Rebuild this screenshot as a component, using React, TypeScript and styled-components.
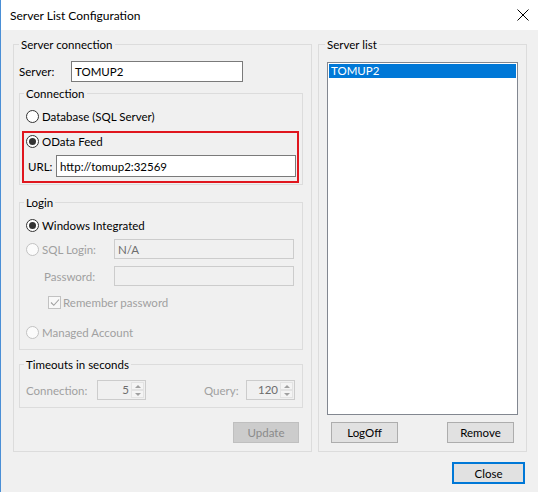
import React from "react";
import styled, { createGlobalStyle } from "styled-components";

const Global = createGlobalStyle`
  html, body { margin: 0; padding: 0; background: #f0f0f0; }
  body { font-family: Lato, "Liberation Sans", sans-serif; font-size: 11.5px; color: #000; }
  * { box-sizing: border-box; }
`;

const Window = styled.div`
  width: 538px;
  height: 492px;
  display: flex;
  flex-direction: column;
  border-left: 1px solid #4a8fd6;
  background: #f0f0f0;
  overflow: hidden;
`;

const TitleBar = styled.div`
  height: 30px;
  flex: none;
  background: #fff;
  display: flex;
  align-items: center;
  justify-content: space-between;
  padding: 0 9px 0 9px;
`;

const Title = styled.span`
  font-size: 12px;
  line-height: 15px;
`;

const CloseX = styled.svg`
  width: 12px;
  height: 12px;
  display: block;
`;

const Body = styled.div`
  flex: 1;
  display: flex;
  flex-direction: column;
  padding: 7px 11px 0 12px;
`;

const Columns = styled.div`
  display: flex;
  gap: 6px;
`;

const Group = styled.fieldset<{ $pad: string; $width?: number; $grow?: boolean }>`
  margin: 0;
  min-width: 0;
  border: 1px solid #dcdcdc;
  padding: ${(p) => p.$pad};
  display: flex;
  flex-direction: column;
  ${(p) => (p.$width ? `width: ${p.$width}px; flex: none;` : "")}
  ${(p) => (p.$grow ? "flex: 1;" : "")}
`;

const Legend = styled.legend<{ $offset?: number }>`
  padding: 0 2px;
  margin-left: ${(p) => p.$offset ?? 0}px;
  height: 15px;
  line-height: 15px;
`;

const Row = styled.div<{ $h?: number; $mt?: number; $ml?: number }>`
  display: flex;
  align-items: center;
  height: ${(p) => p.$h ?? 16}px;
  margin-top: ${(p) => p.$mt ?? 0}px;
  margin-left: ${(p) => p.$ml ?? 0}px;
  flex: none;
`;

const Label = styled.span<{ $w?: number; $disabled?: boolean; $ml?: number }>`
  ${(p) => (p.$w ? `width: ${p.$w}px; flex: none;` : "")}
  margin-left: ${(p) => p.$ml ?? 0}px;
  color: ${(p) => (p.$disabled ? "#a0a0a0" : "#000")};
  line-height: 15px;
  white-space: nowrap;
`;

const TextBox = styled.div<{ $w: number; $h?: number; $disabled?: boolean }>`
  width: ${(p) => p.$w}px;
  height: ${(p) => p.$h ?? 21}px;
  flex: none;
  border: 1px solid ${(p) => (p.$disabled ? "#cccccc" : "#7a7a7a")};
  background: ${(p) => (p.$disabled ? "#f0f0f0" : "#fff")};
  color: ${(p) => (p.$disabled ? "#6d6d6d" : "#000")};
  display: flex;
  align-items: center;
  padding-left: 3px;
  line-height: 15px;
`;

const RadioWrap = styled.label<{ $disabled?: boolean }>`
  display: flex;
  align-items: center;
  gap: 3px;
  color: ${(p) => (p.$disabled ? "#a0a0a0" : "#000")};
  line-height: 15px;
  white-space: nowrap;
`;

const RadioCircle = styled.span<{ $checked?: boolean; $disabled?: boolean }>`
  width: 13px;
  height: 13px;
  border-radius: 50%;
  border: 1px solid ${(p) => (p.$disabled ? "#c2c2c2" : "#333")};
  background: ${(p) => (p.$disabled ? "#fbfbfb" : "#fff")};
  display: flex;
  align-items: center;
  justify-content: center;
  flex: none;
  &::after {
    content: "";
    width: 7px;
    height: 7px;
    border-radius: 50%;
    background: #333;
    display: ${(p) => (p.$checked ? "block" : "none")};
  }
`;

const Radio: React.FC<{ label: string; checked?: boolean; disabled?: boolean }> = ({ label, checked, disabled }) => (
  <RadioWrap $disabled={disabled}>
    <RadioCircle $checked={checked} $disabled={disabled} />
    {label}
  </RadioWrap>
);

const CheckBox = styled.span`
  width: 13px;
  height: 13px;
  border: 1px solid #c2c2c2;
  background: #f8f8f8;
  display: flex;
  align-items: center;
  justify-content: center;
  flex: none;
  margin-right: 2px;
`;

const Highlight = styled.div`
  border: 2px solid #e0161e;
  padding: 0 1px 4px 2px;
  margin-top: 7px;
  display: flex;
  flex-direction: column;
`;

const Spinner = styled.div`
  width: 49px;
  height: 20px;
  flex: none;
  border: 1px solid #cccccc;
  background: #f0f0f0;
  display: flex;
  align-items: stretch;
`;

const SpinValue = styled.span`
  flex: 1;
  text-align: right;
  color: #6d6d6d;
  line-height: 18px;
  padding-right: 2px;
`;

const SpinButtons = styled.div`
  width: 14px;
  display: flex;
  flex-direction: column;
  padding: 1px 1px 1px 0;
`;

const SpinHalf = styled.div`
  flex: 1;
  display: flex;
  align-items: center;
  justify-content: center;
  background: #f4f4f4;
  border: 1px solid #e3e3e3;
`;

const Arrow = styled.span<{ $down?: boolean }>`
  width: 0;
  height: 0;
  border-left: 3px solid transparent;
  border-right: 3px solid transparent;
  ${(p) => (p.$down ? "border-top: 3px solid #a0a0a0;" : "border-bottom: 3px solid #a0a0a0;")}
`;

const SpinBox: React.FC<{ value: string }> = ({ value }) => (
  <Spinner>
    <SpinValue>{value}</SpinValue>
    <SpinButtons>
      <SpinHalf>
        <Arrow />
      </SpinHalf>
      <SpinHalf>
        <Arrow $down />
      </SpinHalf>
    </SpinButtons>
  </Spinner>
);

const TimeoutItem = styled.div<{ $right?: boolean }>`
  display: flex;
  align-items: center;
  ${(p) => (p.$right ? "margin-left: auto;" : "")}
`;

const Button = styled.button<{ $w: number; $h?: number; $disabled?: boolean; $default?: boolean }>`
  width: ${(p) => p.$w}px;
  height: ${(p) => p.$h ?? 21}px;
  flex: none;
  font-family: inherit;
  font-size: 11.5px;
  padding: 0;
  border: ${(p) => (p.$default ? "2px solid #0078d7" : p.$disabled ? "1px solid #bfbfbf" : "1px solid #adadad")};
  background: ${(p) => (p.$disabled ? "#cccccc" : "#e1e1e1")};
  color: ${(p) => (p.$disabled ? "#8a8a8a" : "#000")};
  line-height: 15px;
`;

const UpdateRow = styled.div`
  display: flex;
  justify-content: flex-end;
  margin-top: 14px;
  padding-right: 4px;
`;

const ListBox = styled.div`
  flex: 1;
  background: #fff;
  border: 1px solid #828790;
  padding: 1px;
`;

const ListItem = styled.div<{ $selected?: boolean }>`
  height: 14px;
  line-height: 14px;
  padding-left: 2px;
  background: ${(p) => (p.$selected ? "#0078d7" : "transparent")};
  color: ${(p) => (p.$selected ? "#fff" : "#000")};
`;

const ListButtons = styled.div`
  display: flex;
  justify-content: space-between;
  margin-top: 7px;
  padding: 0 4px;
`;

const Footer = styled.div`
  display: flex;
  justify-content: flex-end;
  margin-top: 10px;
  padding-right: 2px;
`;

export default function App() {
  return (
    <>
      <Global />
      <Window>
        <TitleBar>
          <Title>Server List Configuration</Title>
          <CloseX viewBox="0 0 12 12">
            <path d="M0.5 0.5 L11.5 11.5 M11.5 0.5 L0.5 11.5" stroke="#000" strokeWidth="1" fill="none" />
          </CloseX>
        </TitleBar>
        <Body>
          <Columns>
            <Group $pad="9px 8px 8px 5px" $width={299}>
              <Legend>Server connection</Legend>
              <Row $h={21}>
                <Label $w={52}>Server:</Label>
                <TextBox $w={172}>TOMUP2</TextBox>
              </Row>

              <Group $pad="7px 3px 1px 2px" style={{ marginTop: 4 }}>
                <Legend $offset={2}>Connection</Legend>
                <Row $ml={4}>
                  <Radio label="Database (SQL Server)" />
                </Row>
                <Highlight>
                  <Row>
                    <Radio label="OData Feed" checked />
                  </Row>
                  <Row $h={22} $mt={6} $ml={2}>
                    <Label $w={28}>URL:</Label>
                    <TextBox $w={240} $h={22}>http://tomup2:32569</TextBox>
                  </Row>
                </Highlight>
              </Group>

              <Group $pad="7px 8px 9px 6px" style={{ marginTop: 10 }}>
                <Legend $offset={-2}>Login</Legend>
                <Row>
                  <Radio label="Windows Integrated" checked />
                </Row>
                <Row $h={20} $mt={6}>
                  <Label $w={88} as="div">
                    <Radio label="SQL Login:" disabled />
                  </Label>
                  <TextBox $w={180} $h={20} $disabled>
                    N/A
                  </TextBox>
                </Row>
                <Row $h={20} $mt={7}>
                  <Label $w={70} $ml={18} $disabled>
                    Password:
                  </Label>
                  <TextBox $w={180} $h={20} $disabled />
                </Row>
                <Row $mt={8} $ml={22}>
                  <CheckBox>
                    <svg width="10" height="9" viewBox="0 0 10 9">
                      <path d="M1 4.5 L3.8 7.3 L9 1.5" stroke="#a0a0a0" strokeWidth="1.1" fill="none" />
                    </svg>
                  </CheckBox>
                  <Label $disabled>Remember password</Label>
                </Row>
                <Row $mt={14}>
                  <Radio label="Managed Account" disabled />
                </Row>
              </Group>

              <Group $pad="8px 7px 7px 6px" style={{ marginTop: 7 }}>
                <Legend $offset={-2}>Timeouts in seconds</Legend>
                <Row $h={20}>
                  <TimeoutItem>
                    <Label $w={71} $disabled>
                      Connection:
                    </Label>
                    <SpinBox value="5" />
                  </TimeoutItem>
                  <TimeoutItem $right>
                    <Label $w={42} $disabled>
                      Query:
                    </Label>
                    <SpinBox value="120" />
                  </TimeoutItem>
                </Row>
              </Group>

              <UpdateRow>
                <Button $w={66} $disabled>
                  Update
                </Button>
              </UpdateRow>
            </Group>

            <Group $pad="10px 8px 8px 8px" $grow>
              <Legend $offset={-2}>Server list</Legend>
              <ListBox>
                <ListItem $selected>TOMUP2</ListItem>
              </ListBox>
              <ListButtons>
                <Button $w={67}>LogOff</Button>
                <Button $w={67}>Remove</Button>
              </ListButtons>
            </Group>
          </Columns>
          <Footer>
            <Button $w={73} $h={22} $default>
              Close
            </Button>
          </Footer>
        </Body>
      </Window>
    </>
  );
}
